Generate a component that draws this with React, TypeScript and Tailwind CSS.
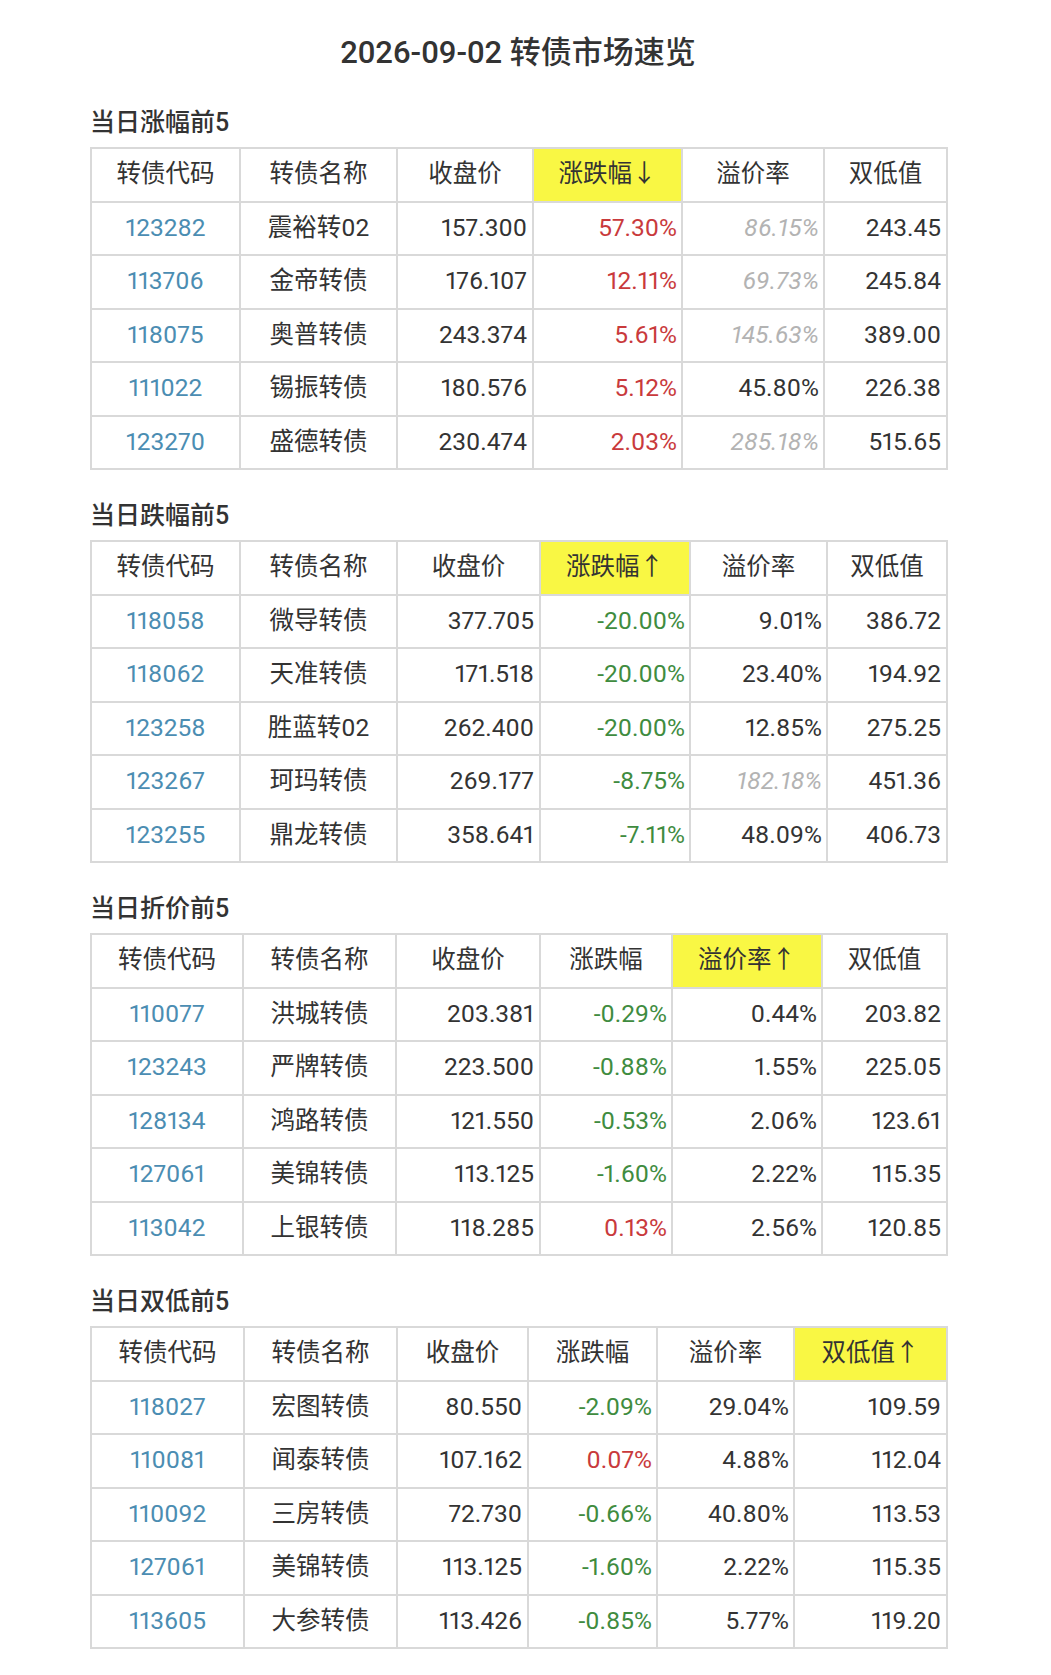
import React from "react";

type Row = [string, string, string, string, string, string];

interface Section {
  title: string;
  widths: number[];
  sortCol: number;
  arrow: string;
  rows: Row[];
}

const headers = ["转债代码", "转债名称", "收盘价", "涨跌幅", "溢价率", "双低值"];

const sections: Section[] = [
  {
    title: "当日涨幅前5",
    widths: [149, 157, 136, 149, 142, 123],
    sortCol: 3,
    arrow: "↓",
    rows: [
      ["123282", "震裕转02", "157.300", "57.30%", "86.15%", "243.45"],
      ["113706", "金帝转债", "176.107", "12.11%", "69.73%", "245.84"],
      ["118075", "奥普转债", "243.374", "5.61%", "145.63%", "389.00"],
      ["111022", "锡振转债", "180.576", "5.12%", "45.80%", "226.38"],
      ["123270", "盛德转债", "230.474", "2.03%", "285.18%", "515.65"],
    ],
  },
  {
    title: "当日跌幅前5",
    widths: [149, 157, 143, 150, 137, 120],
    sortCol: 3,
    arrow: "↑",
    rows: [
      ["118058", "微导转债", "377.705", "-20.00%", "9.01%", "386.72"],
      ["118062", "天准转债", "171.518", "-20.00%", "23.40%", "194.92"],
      ["123258", "胜蓝转02", "262.400", "-20.00%", "12.85%", "275.25"],
      ["123267", "珂玛转债", "269.177", "-8.75%", "182.18%", "451.36"],
      ["123255", "鼎龙转债", "358.641", "-7.11%", "48.09%", "406.73"],
    ],
  },
  {
    title: "当日折价前5",
    widths: [152, 153, 144, 132, 150, 125],
    sortCol: 4,
    arrow: "↑",
    rows: [
      ["110077", "洪城转债", "203.381", "-0.29%", "0.44%", "203.82"],
      ["123243", "严牌转债", "223.500", "-0.88%", "1.55%", "225.05"],
      ["128134", "鸿路转债", "121.550", "-0.53%", "2.06%", "123.61"],
      ["127061", "美锦转债", "113.125", "-1.60%", "2.22%", "115.35"],
      ["113042", "上银转债", "118.285", "0.13%", "2.56%", "120.85"],
    ],
  },
  {
    title: "当日双低前5",
    widths: [153, 153, 131, 129, 137, 153],
    sortCol: 5,
    arrow: "↑",
    rows: [
      ["118027", "宏图转债", "80.550", "-2.09%", "29.04%", "109.59"],
      ["110081", "闻泰转债", "107.162", "0.07%", "4.88%", "112.04"],
      ["110092", "三房转债", "72.730", "-0.66%", "40.80%", "113.53"],
      ["127061", "美锦转债", "113.125", "-1.60%", "2.22%", "115.35"],
      ["113605", "大参转债", "113.426", "-0.85%", "5.77%", "119.20"],
    ],
  },
];

const cell = "border-2 border-[#d9d9d9] p-0 h-[53.5px]";

function QuoteTable({ section }: { section: Section }) {
  return (
    <table className="w-[856px] table-fixed border-collapse text-[24.5px] text-[#333] [font-variant-numeric:proportional-nums]">
      <colgroup>
        {section.widths.map((w, i) => (
          <col key={i} style={{ width: w }} />
        ))}
      </colgroup>
      <thead>
        <tr>
          {headers.map((h, i) => (
            <th
              key={h}
              className={`${cell} text-center font-normal ${i === section.sortCol ? "bg-[#f9f744]" : ""}`}
            >
              {i === section.sortCol ? `${h}${section.arrow}` : h}
            </th>
          ))}
        </tr>
      </thead>
      <tbody>
        {section.rows.map((r) => {
          const up = !r[3].startsWith("-");
          const highPremium = parseFloat(r[4]) > 50;
          return (
            <tr key={r[0] + section.title}>
              <td className={`${cell} text-center text-[#4b8db2]`}>{r[0]}</td>
              <td className={`${cell} text-center`}>{r[1]}</td>
              <td className={`${cell} text-right pr-[5px]`}>{r[2]}</td>
              <td className={`${cell} text-right pr-[4px] ${up ? "text-[#c93a3c]" : "text-[#3f8c3f]"}`}>{r[3]}</td>
              <td className={`${cell} text-right pr-[4px] ${highPremium ? "italic text-[#b3b3b3]" : ""}`}>{r[4]}</td>
              <td className={`${cell} text-right pr-[5px]`}>{r[5]}</td>
            </tr>
          );
        })}
      </tbody>
    </table>
  );
}

export default function App() {
  return (
    <div className="min-h-[1675px] w-[1051px] bg-white pl-[90px] pt-[33px] font-['Roboto','Noto_Sans_CJK_SC',sans-serif] text-[#333]">
      <div className="w-[856px]">
        <h1 className="h-[40px] text-center text-[31px] font-medium leading-[40px] text-[#333]">
          2026-09-02 转债市场速览
        </h1>
        <div className="mt-[33px] flex flex-col gap-[29px]">
          {sections.map((s) => (
            <section key={s.title}>
              <h2 className="mb-[7px] h-[34px] text-[25px] font-medium leading-[34px]">{s.title}</h2>
              <QuoteTable section={s} />
            </section>
          ))}
        </div>
      </div>
    </div>
  );
}
